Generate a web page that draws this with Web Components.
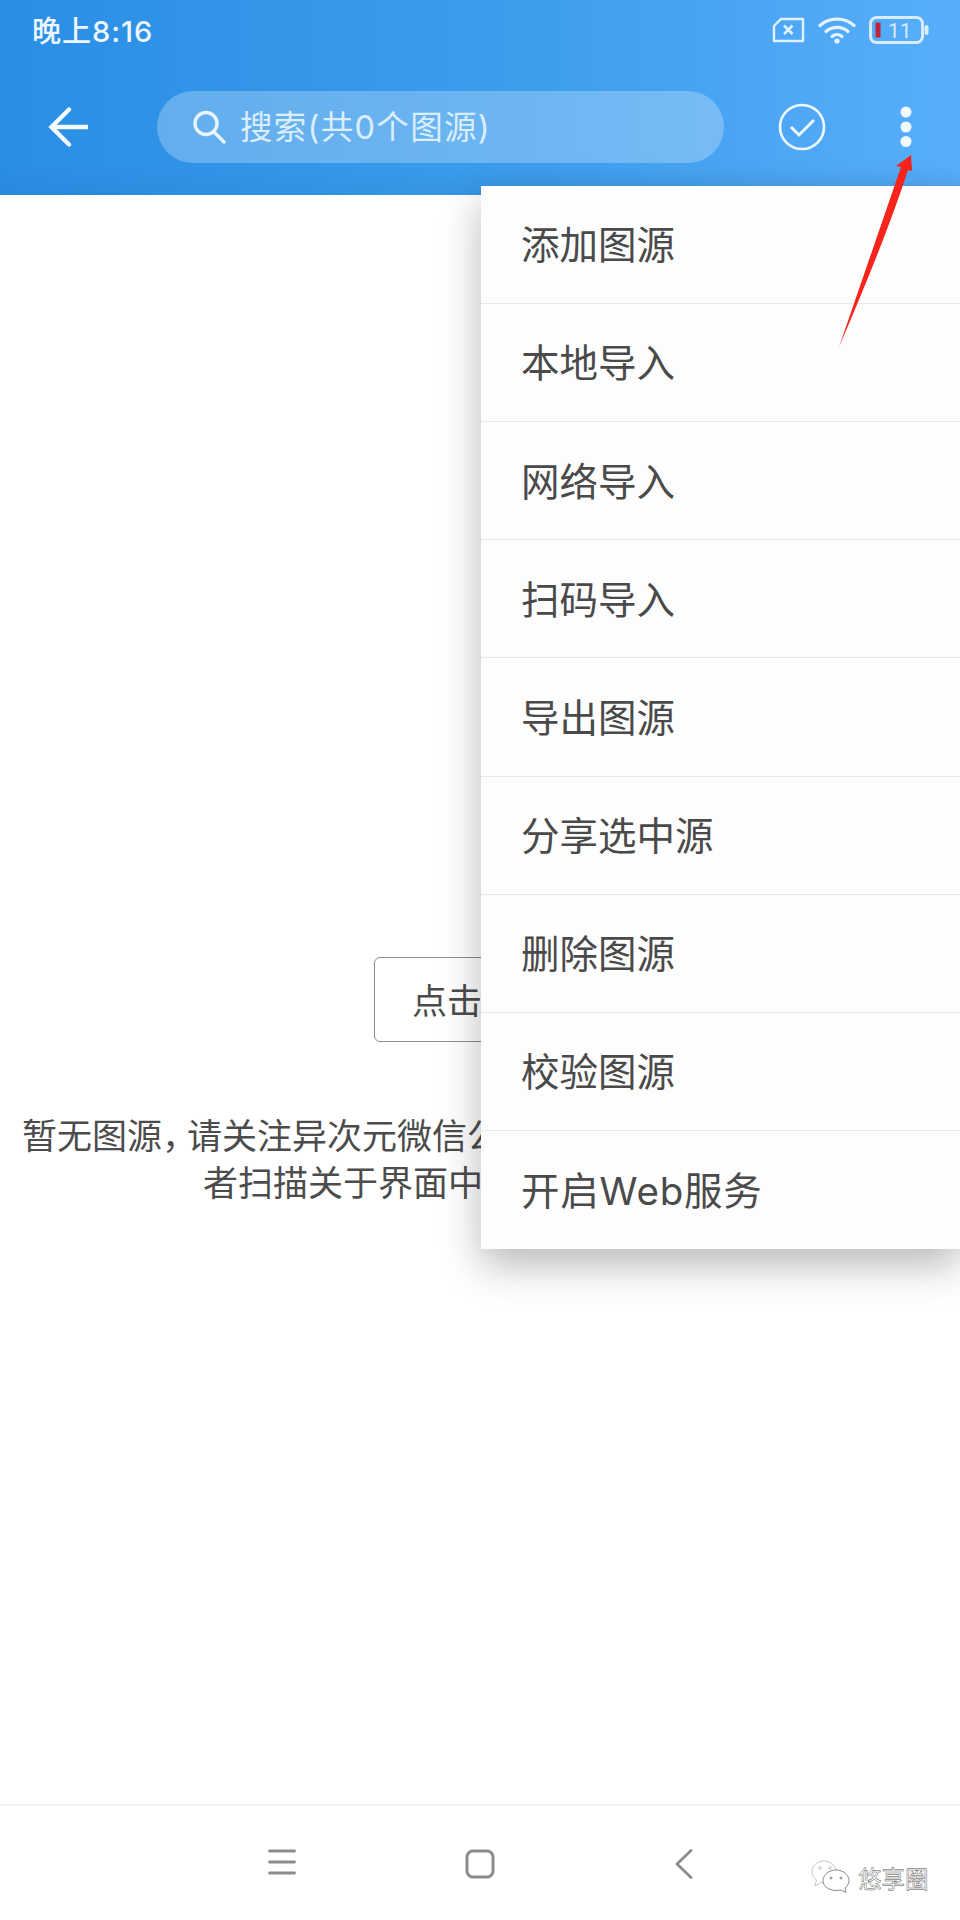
<!DOCTYPE html>
<html lang="zh"><head><meta charset="utf-8"><title>图源</title>
<style>html,body{margin:0;padding:0;background:#fff}body{font-family:Inter,"Noto Sans CJK SC",sans-serif}</style></head>
<body><app-shell></app-shell>
<script>
const FONT='Inter,"Noto Sans CJK SC",sans-serif';
function def(name,html){customElements.define(name,class extends HTMLElement{constructor(){super();this.attachShadow({mode:'open'}).innerHTML=html;}});}
def('status-bar',`<style>
:host{display:flex;height:60px;align-items:center;justify-content:space-between;padding:0 31px 0 32px;color:#eef7ff;box-sizing:border-box}
.t{font:500 29px/1 ${FONT};letter-spacing:1px;position:relative;top:1px}
.r{display:flex;align-items:center;gap:13px}
svg{display:block}
</style><span class="t">晚上8:16</span><div class="r">
<svg width="33" height="26" viewBox="0 0 33 26" fill="none" stroke="#e2f1ff" stroke-width="2.400"><path d="M9 2H31V24H2V9Z" stroke-linejoin="round"/><path d="M12 8.500l8.500 8.500M20.500 8.500L12 17" stroke-width="2.600"/></svg>
<svg width="38" height="28" viewBox="0 0 38 28" fill="none" stroke="#e6f3ff" stroke-width="3.200" stroke-linecap="round"><path d="M2 9.500C11 1 27 1 36 9.500"/><path d="M8 15.500C14 10 24 10 30 15.500"/><path d="M14 20.500c3-2.500 7-2.500 10 0"/><circle cx="19" cy="25" r="2.600" fill="#e6f3ff" stroke="none"/></svg>
<svg width="60" height="28" viewBox="0 0 60 28" fill="none"><rect x="1.500" y="1.500" width="52" height="25" rx="6" stroke="#d8ecff" stroke-width="3"/><rect x="6.500" y="6.500" width="5" height="15" fill="#c0233c"/><rect x="55.500" y="9" width="4" height="10" rx="2" fill="#d8ecff"/><text x="19" y="21.500" font-family="Roboto" font-size="21" fill="#d8ecff">11</text></svg>
</div>`);
def('search-pill',`<style>
:host{display:flex;align-items:center;width:567px;height:72px;border-radius:36px;background:rgba(255,255,255,.25);padding-left:34px;box-sizing:border-box;gap:13px;color:#dbeeff;font:400 32.500px/1 ${FONT};letter-spacing:1.300px}
svg{display:block;flex:none}
span{position:relative;top:1px}
</style><svg width="36" height="36" viewBox="0 0 36 36" fill="none" stroke="#e8f4ff" stroke-width="3.400" stroke-linecap="round"><circle cx="15" cy="14.500" r="11"/><path d="M23 23l10 10"/></svg><span><slot></slot></span>`);
def('app-toolbar',`<style>
:host{display:flex;height:135px;align-items:center;box-sizing:border-box;padding-bottom:1px;position:relative}
svg{display:block;flex:none}
.back{margin:0 68px 0 48px}.check{margin:0 74px 0 54px}
</style>
<svg class="back" width="41" height="40" viewBox="0 0 41 40" fill="none" stroke="#f2f9ff" stroke-width="4.400"><path d="M21 2.500L3.500 20 21 37.500" stroke-linecap="round"/><path d="M4 20H40"/></svg>
<slot></slot>
<svg class="check" width="48" height="48" viewBox="0 0 48 48" fill="none" stroke="#f0f8ff" stroke-width="2.600"><circle cx="24" cy="24" r="22"/><path d="M13 24l8 8 15-15" stroke-width="3"/></svg>
<svg width="12" height="42" viewBox="0 0 12 42" fill="#f2f9ff"><circle cx="6" cy="6" r="5.500"/><circle cx="6" cy="21" r="5.500"/><circle cx="6" cy="35.500" r="5.500"/></svg>`);
def('app-header',`<style>
:host{display:block;height:195px;background:linear-gradient(180deg,rgba(0,0,0,0) 85%,rgba(0,30,70,.05) 100%),linear-gradient(90deg,#2a8ee5 0%,#3a9cec 50%,#58aefb 100%)}
</style><slot></slot>`);
def('empty-state',`<style>
:host{display:flex;flex-direction:column;align-items:flex-start;flex:1;padding-top:762px;box-sizing:border-box;color:#4c4c4c;font:400 35px/47px ${FONT}}
.b{margin-left:374px;width:212px;height:85px;box-sizing:border-box;border:1px solid #8c8c8c;border-radius:6px;display:flex;align-items:center;padding:4px 0 0 37px}
p{margin:70px 0 0;position:relative;top:1px;white-space:nowrap}
p span{display:block}
.l1{padding-left:22px}.l2{padding-left:203px}
i{font-style:normal;letter-spacing:-10px}
</style><div class="b">点击</div><p><span class="l1">暂无图源<i>，</i>请关注异次元微信公</span><span class="l2">者扫描关于界面中</span></p>`);
def('menu-item',`<style>
:host{display:flex;align-items:center;box-sizing:border-box;padding:2px 0 0 40px;border-bottom:1.500px solid #eaeaea;color:#4a4a4a;font:400 38.500px/1 ${FONT}}
:host(:last-child){border-bottom:0;letter-spacing:.8px}
</style><slot></slot>`);
def('popup-menu',`<style>
:host{position:absolute;left:481px;top:186px;right:0;height:1063px;display:grid;grid-template-rows:repeat(9,1fr);background:#fdfdfd;box-shadow:0 16px 38px rgba(0,0,0,.28)}
</style><slot></slot>`);
def('nav-bar',`<style>
:host{display:flex;height:116px;border-top:2px solid #f0f0f0;box-sizing:border-box;padding:43px 0 0 268px;align-items:flex-start;position:relative}
svg{display:block;flex:none}
.m{margin-right:169px}.s{margin-right:180px}
</style>
<svg class="m" width="28" height="26" viewBox="0 0 28 26" stroke="#8c8c8c" stroke-width="2.800" stroke-linecap="round"><path d="M1.500 2H26.500M1.500 13H26.500M1.500 24H26.500"/></svg>
<svg class="s" width="30" height="30" viewBox="0 0 30 30" fill="none" stroke="#8a8a8a" stroke-width="3"><rect x="2" y="2" width="26" height="26" rx="6"/></svg>
<svg width="18" height="30" viewBox="0 0 18 30" fill="none" stroke="#8c8c8c" stroke-width="2.800" stroke-linecap="round" stroke-linejoin="round"><path d="M16 1.500L2 15l14 13.500"/></svg>
<slot></slot>`);
def('wx-mark',`<style>
:host{position:absolute;left:811px;top:54px;display:flex;align-items:flex-end;gap:8px}
svg{display:block}
span{font:400 23.500px/1 ${FONT};color:#fff;-webkit-text-stroke:.45px #555;position:relative;bottom:2px;white-space:nowrap}
</style>
<svg width="39" height="33" viewBox="0 0 39 33" fill="#fff" stroke="#bdbdbd" stroke-width=".9"><path d="M13 1C6 1 1 6 1 12c0 3.500 2 6 4.500 8L4 26l6-3.500c5 1 12 0 15-6 3-7-3-15.500-12-15.500Z"/><circle cx="9" cy="8" r="1.200"/><circle cx="19" cy="8" r="1.200"/><path stroke="#7c7c7c" d="M25 10c7 0 13 5 13 10.500 0 3.500-2 6-4 7.500l1 4.500-5-2.500c-9 2-18-2-18-9.500C12 15 18 10 25 10Z"/><circle stroke="#7c7c7c" cx="20" cy="18" r="1"/><circle stroke="#7c7c7c" cx="30" cy="18" r="1"/></svg><span>悠享圈</span>`);
def('red-arrow',`<style>
:host{position:absolute;left:830px;top:150px;width:90px;height:205px;display:block}
svg{display:block}
</style><svg width="90" height="205" viewBox="0 0 90 205"><path d="M9 197L71 17 66 16 81 5 82 21 78 20Q56 88 9 197Z" fill="#f8231a"/></svg>`);
def('app-shell',`<style>
:host{display:flex;flex-direction:column;position:relative;width:960px;height:1920px;overflow:hidden;background:#fff}
</style>
<app-header><status-bar></status-bar><app-toolbar><search-pill>搜索(共0个图源)</search-pill></app-toolbar></app-header>
<empty-state></empty-state>
<nav-bar><wx-mark></wx-mark></nav-bar>
<popup-menu>
<menu-item>添加图源</menu-item><menu-item>本地导入</menu-item><menu-item>网络导入</menu-item><menu-item>扫码导入</menu-item><menu-item>导出图源</menu-item><menu-item>分享选中源</menu-item><menu-item>删除图源</menu-item><menu-item>校验图源</menu-item><menu-item>开启Web服务</menu-item>
</popup-menu>
<red-arrow></red-arrow>`);
</script></body></html>
